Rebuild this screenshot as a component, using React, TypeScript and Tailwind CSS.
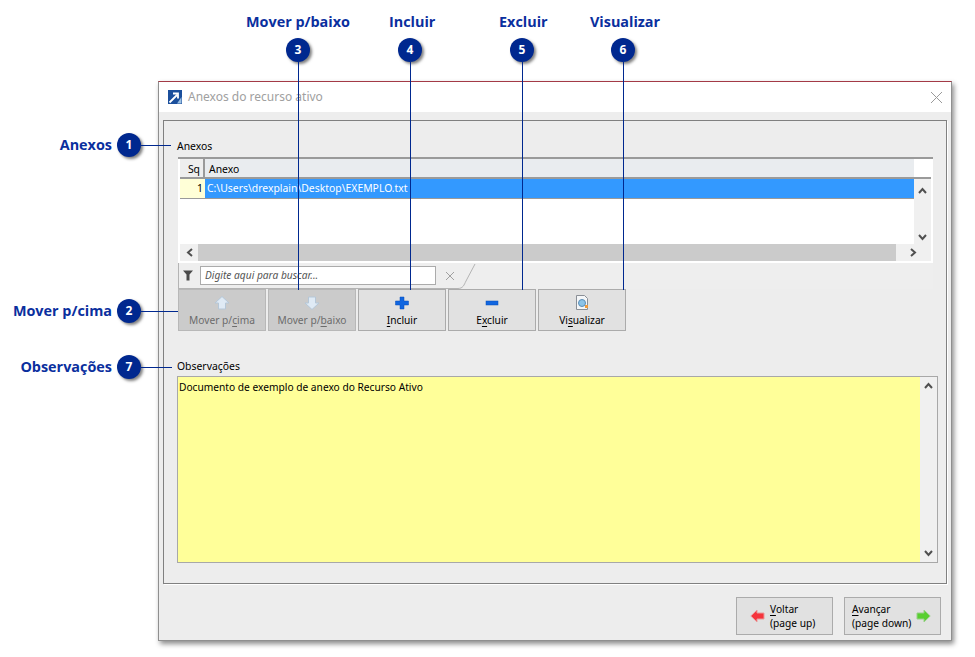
import React from "react";

const Badge = ({ n }: { n: number }) => (
  <div className="flex h-6 w-6 items-center justify-center rounded-full bg-[#00288f] text-[12px] font-bold text-white shadow-[2px_2px_3px_rgba(0,0,0,0.5)]">
    {n}
  </div>
);

const U = ({ children }: { children: React.ReactNode }) => <span className="underline underline-offset-2">{children}</span>;

const TopNote = ({ label, n, x, h, labelX }: { label: string; n: number; x: number; h: number; labelX: number }) => (
  <>
    <div className="absolute top-[12px] whitespace-nowrap text-[14.400px] leading-[20px] font-bold text-[#0a2f9e]" style={{ left: labelX }}>
      {label}
    </div>
    <div className="absolute top-[38px]" style={{ left: x - 12 }}>
      <Badge n={n} />
    </div>
    <div className="absolute top-[62px] w-px bg-[#00288f]" style={{ left: x, height: h }} />
  </>
);

const SideNote = ({ label, n, y, right, lineTo }: { label: string; n: number; y: number; right: number; lineTo: number }) => (
  <>
    <div className="absolute whitespace-nowrap text-right text-[14.400px] leading-[20px] font-bold text-[#0a2f9e]" style={{ top: y - 10, right: 975 - right }}>
      {label}
    </div>
    <div className="absolute" style={{ left: 117, top: y - 12 }}>
      <Badge n={n} />
    </div>
    <div className="absolute h-px bg-[#00288f]" style={{ left: 141, top: y, width: lineTo - 141 }} />
  </>
);

const Up = () => (
  <svg width="18" height="16" viewBox="0 0 18 16"><path d="M9 1.500 L16 8 L12.500 8 L12.500 14 L5.500 14 L5.500 8 L2 8 Z" fill="#dfeaf5" stroke="#b5c7d8" /></svg>
);
const Down = () => (
  <svg width="18" height="16" viewBox="0 0 18 16"><path d="M9 14.500 L16 8 L12.500 8 L12.500 2 L5.500 2 L5.500 8 L2 8 Z" fill="#dfeaf5" stroke="#b5c7d8" /></svg>
);
const Plus = () => (
  <svg width="18" height="16" viewBox="0 0 18 16"><path d="M7 2h4v4h4.500v4H11v4H7v-4H2.500V6H7z" fill="#1166e0" stroke="#0b4fb8" strokeWidth="0.500" /></svg>
);
const Minus = () => (
  <svg width="18" height="16" viewBox="0 0 18 16"><rect x="3" y="6" width="12" height="4" fill="#1166e0" stroke="#0b4fb8" strokeWidth="0.500" /></svg>
);
const Doc = () => (
  <svg width="18" height="17" viewBox="0 0 18 17">
    <path d="M3.500 1.500h8l3 3v11h-11z" fill="#f4f6f8" stroke="#8a8f96" />
    <circle cx="9" cy="9" r="3.500" fill="#8cc4e8" stroke="#5b8db5" />
    <rect x="12" y="11" width="3" height="3" fill="#ef9a3c" />
  </svg>
);

const ToolBtn = ({ icon, children, disabled }: { icon: React.ReactNode; children: React.ReactNode; disabled?: boolean }) => (
  <div
    className={`flex h-[42px] w-[88px] flex-col items-center border pt-[4px] text-[10.200px] leading-[14px] ${
      disabled ? "border-[#b8b8b8] bg-[#cbcbcb] text-[#6c6c6c]" : "border-[#ababab] bg-[#e1e1e1] text-black"
    }`}
  >
    <div className="flex h-[17px] items-center">{icon}</div>
    <div className="mt-[2px] whitespace-nowrap">{children}</div>
  </div>
);

const Chevron = ({ d }: { d: string }) => (
  <svg width="9" height="7" viewBox="0 0 9 7"><path d={d} fill="none" stroke="#505050" strokeWidth="2" /></svg>
);

export default function App() {
  return (
    <div className="relative h-[657px] w-[975px] overflow-hidden bg-white pt-[81px] pl-[158px] font-['Open_Sans','Noto_Sans',sans-serif]">
      <div className="h-[560px] w-[794px] border border-[#8f8f8f] border-t-[#a33a46] bg-[#ededed] font-['Noto_Sans',sans-serif] shadow-[2px_3px_5px_rgba(0,0,0,0.45)]">
        {/* Title bar */}
        <div className="flex h-[30px] items-center bg-white pl-[9px] pr-[8px]">
          <svg width="14" height="14" viewBox="0 0 14 14" className="mr-[6px]">
            <rect width="14" height="14" fill="#1b4f9c" />
            <path d="M1.500 12.500 L9 5 M5 3.500 H10 V8.500" stroke="#fff" strokeWidth="1.800" fill="none" />
            <path d="M9 13.500 L13.500 7 V13.500 Z" fill="#9cc0e2" />
          </svg>
          <span className="flex-1 text-[12px] text-[#a0a0a0]">Anexos do recurso ativo</span>
          <svg width="13" height="13" viewBox="0 0 13 13"><path d="M1 1 L12 12 M12 1 L1 12" stroke="#9a9a9a" strokeWidth="1" /></svg>
        </div>
        {/* Panel */}
        <div className="mx-[4px] mt-[8px] h-[464px] w-[784px] border border-[#808080] pl-[14px] pt-[17px] shadow-[1px_1px_0_#ffffff]">
          <div className="-ml-[1px] h-[19px] text-[10.400px] leading-[16px] text-black">Anexos</div>
          <div className="h-[132px] w-[755px] border-t-2 border-[#9a9a9a] bg-[#eeeeee]">
            <div className="h-[104px] border-x-2 border-b-2 border-white bg-white">
              <div className="flex h-[20px] border-b-2 border-[#9a9a9a] text-[10.400px] leading-[20px] text-black">
                <div className="w-[25px] border-r-2 border-[#9a9a9a] bg-[#eeeeee] pr-[3px] text-right">Sq</div>
                <div className="w-[709px] bg-[#e9ecef] pl-[4px]">Anexo</div>
              </div>
              <div className="flex h-[65px]">
                <div className="w-[734px]">
                  <div className="flex h-[20px] border-b border-[#9a9a9a] text-[10.400px] leading-[19px]">
                    <div className="w-[25px] bg-[#ffffd7] pr-[2px] text-right text-black">1</div>
                    <div className="flex-1 bg-[#3399ff] pl-[2px] text-white">C:\Users\drexplain\Desktop\EXEMPLO.txt</div>
                  </div>
                </div>
                <div className="flex w-[17px] flex-col items-center justify-between bg-[#f0f0f0] pt-[8px] pb-[3px]">
                  <Chevron d="M1 6 L4.500 2 L8 6" />
                  <Chevron d="M1 1 L4.500 5 L8 1" />
                </div>
              </div>
              <div className="flex h-[17px]">
                <div className="flex w-[18px] items-center justify-center bg-[#f0f0f0]"><svg width="7" height="9" viewBox="0 0 7 9"><path d="M6 1 L2 4.500 L6 8" fill="none" stroke="#505050" strokeWidth="2" /></svg></div>
                <div className="w-[698px] bg-[#cbcbcb]" />
                <div className="flex flex-1 items-center justify-center bg-[#f0f0f0]"><svg width="7" height="9" viewBox="0 0 7 9"><path d="M1 1 L5 4.500 L1 8" fill="none" stroke="#505050" strokeWidth="2" /></svg></div>
              </div>
            </div>
            <div className="flex h-[26px]">
              <div className="flex w-[280px] items-center border-b border-l border-[#b4b4b4] pl-[4px]">
                <svg width="10" height="11" viewBox="0 0 10 11" className="mr-[7px]"><path d="M0 0.500H10L6.500 4.500V10.500H3.500V4.500Z" fill="#4a4a4a" /></svg>
                <div className="h-[19px] w-[236px] border border-[#ababab] bg-white pl-[4px] text-[10.200px] leading-[17px] italic text-[#555]">Digite aqui para buscar...</div>
                <svg width="10" height="10" viewBox="0 0 10 10" className="ml-[9px]"><path d="M1 1 L9 9 M9 1 L1 9" stroke="#a0a0a0" /></svg>
              </div>
              <svg width="20" height="26" viewBox="0 0 20 26"><path d="M0 25.500 C5 25.500 6 22 8 18 L17 1" stroke="#b4b4b4" fill="none" /></svg>
            </div>
          </div>
          <div className="flex gap-[2px]">
            <ToolBtn disabled icon={<Up />}>Mover p/<U>c</U>ima</ToolBtn>
            <ToolBtn disabled icon={<Down />}>Mover p/<U>b</U>aixo</ToolBtn>
            <ToolBtn icon={<Plus />}><U>I</U>ncluir</ToolBtn>
            <ToolBtn icon={<Minus />}>E<U>x</U>cluir</ToolBtn>
            <ToolBtn icon={<Doc />}>Vi<U>s</U>ualizar</ToolBtn>
          </div>
          <div className="-ml-[1px] mt-[27px] h-[18px] text-[10.400px] leading-[16px] text-black">Observações</div>
          <div className="flex h-[187px] w-[761px] -translate-x-px border border-[#a8a8a8] bg-[#ffff99]">
            <div className="flex-1 pl-[1px] text-[10.200px] leading-[20px] text-black">Documento de exemplo de anexo do Recurso Ativo</div>
            <div className="flex w-[17px] flex-col items-center justify-between bg-[#f0f0f0] py-[5px]">
              <Chevron d="M1 6 L4.500 2 L8 6" />
              <Chevron d="M1 1 L4.500 5 L8 1" />
            </div>
          </div>
        </div>
        {/* Footer */}
        <div className="mt-[13px] flex justify-end gap-[11px] pr-[10px]">
          <div className="flex h-[38px] w-[97px] items-center border border-[#ababab] bg-[#e1e1e1] pl-[13px] text-[10.200px] leading-[14px] text-black">
            <svg width="15" height="14" viewBox="0 0 15 14" className="mr-[5px]"><path d="M0.800 7 L7 1 V4 H14 V10 H7 V13 Z" fill="#f5333b" stroke="#e99a9a" /></svg>
            <div><U>V</U>oltar<br />(page up)</div>
          </div>
          <div className="flex h-[38px] w-[97px] items-center border border-[#ababab] bg-[#e1e1e1] pl-[7px] text-[10.200px] leading-[14px] text-black">
            <div><U>A</U>vançar<br />(page down)</div>
            <svg width="15" height="14" viewBox="0 0 15 14" className="ml-[5px]"><path d="M14.200 7 L8 1 V4 H1 V10 H8 V13 Z" fill="#58cf30" stroke="#98cf88" /></svg>
          </div>
        </div>
      </div>

      <TopNote label="Mover p/baixo" n={3} x={298} h={228} labelX={246} />
      <TopNote label="Incluir" n={4} x={410} h={228} labelX={389} />
      <TopNote label="Excluir" n={5} x={522} h={228} labelX={499} />
      <TopNote label="Visualizar" n={6} x={623} h={228} labelX={590} />
      <SideNote label="Anexos" n={1} y={145} right={112} lineTo={171} />
      <SideNote label="Mover p/cima" n={2} y={311} right={112} lineTo={178} />
      <SideNote label="Observações" n={7} y={367} right={112} lineTo={172} />
    </div>
  );
}
